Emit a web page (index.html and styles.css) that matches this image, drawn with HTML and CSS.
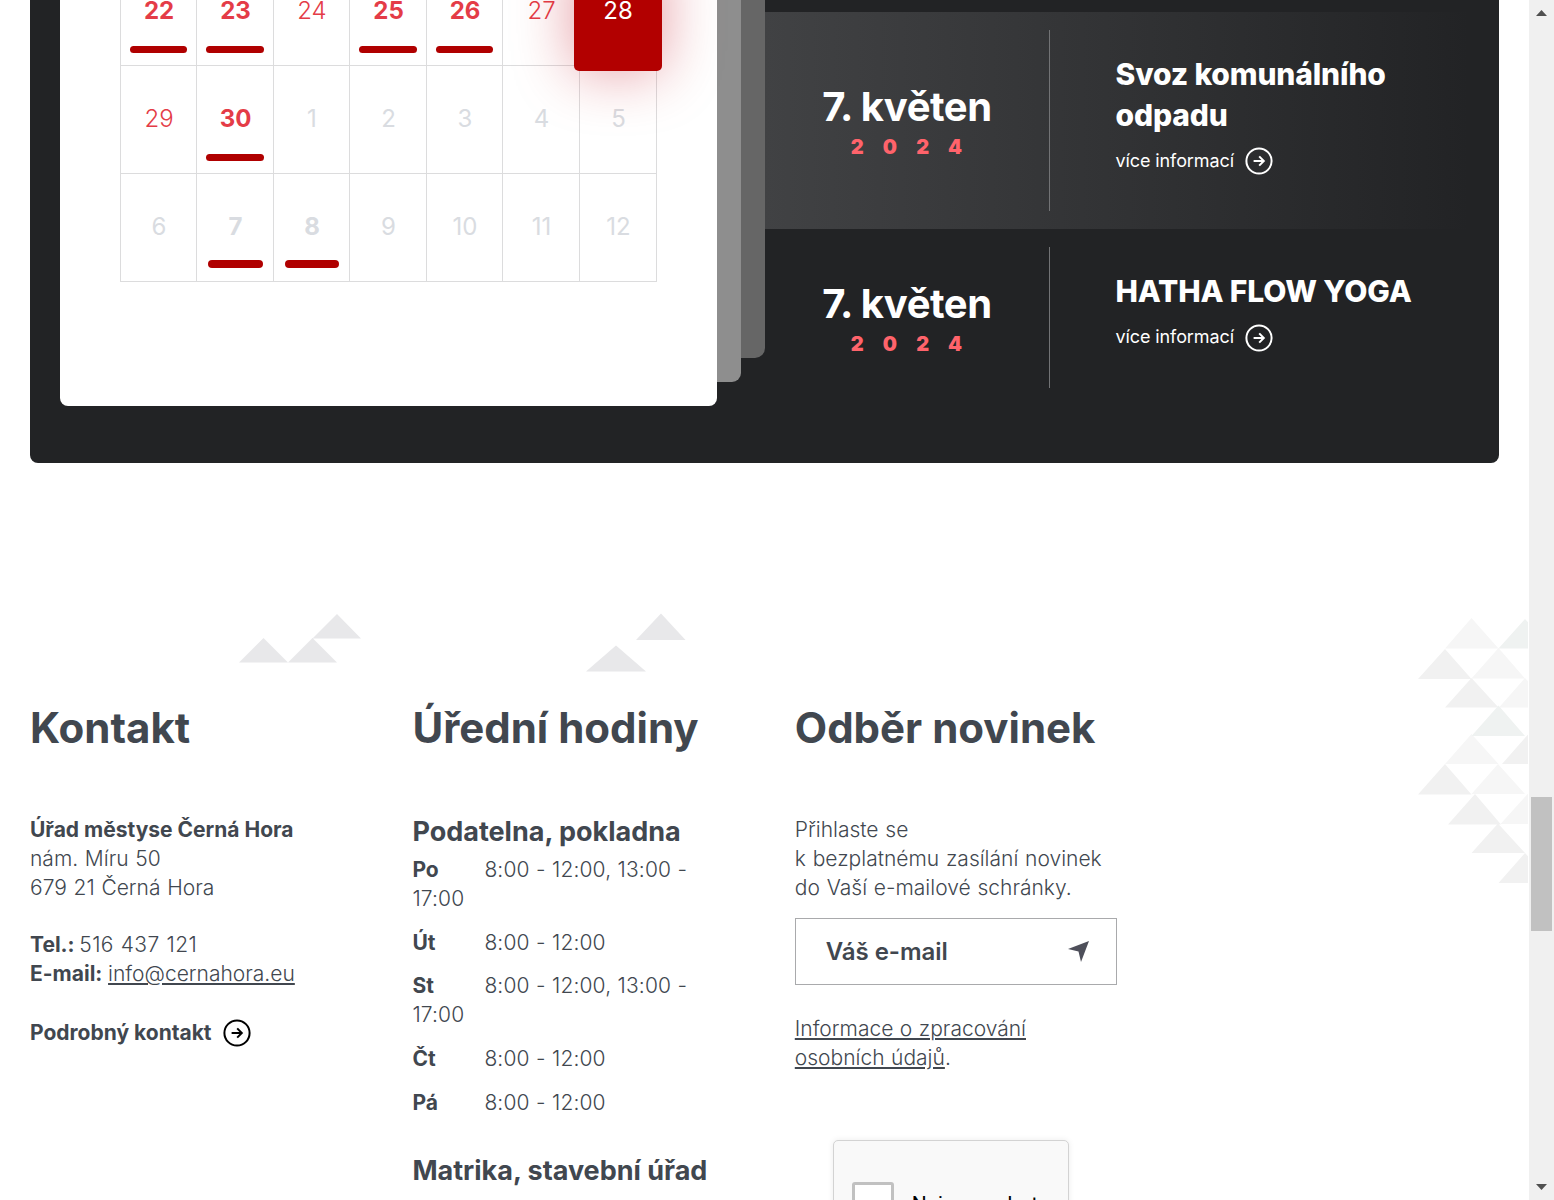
FILE: index.html
```html
<!DOCTYPE html>
<html lang="cs">
<head>
<meta charset="utf-8">
<title>Městys Černá Hora</title>
<link rel="stylesheet" href="styles.css">
</head>
<body>
<svg class="sprite" aria-hidden="true">
  <symbol id="arrow" viewBox="0 0 28 28">
    <circle cx="14" cy="14" r="12.6" fill="none" stroke="currentColor" stroke-width="2"/>
    <path d="M8.6 14H18.6M14.2 9.4L18.8 14L14.2 18.6" fill="none" stroke="currentColor" stroke-width="2"/>
  </symbol>
</svg>
<div class="page">
  <main class="content">
    <section class="agenda">
      <div class="stack">
        <div class="calendar">
          <div class="days">
            <span class="day busy">22</span><span class="day busy">23</span><span class="day">24</span><span class="day busy">25</span><span class="day busy">26</span><span class="day">27</span><span class="day today"><span class="today-box">28</span></span>
            <span class="day">29</span><span class="day busy">30</span><span class="day other">1</span><span class="day other">2</span><span class="day other">3</span><span class="day other">4</span><span class="day other">5</span>
            <span class="day other">6</span><span class="day other busy">7</span><span class="day other busy">8</span><span class="day other">9</span><span class="day other">10</span><span class="day other">11</span><span class="day other">12</span>
          </div>
        </div>
      </div>
      <div class="events">
        <article class="event shaded">
          <div class="date"><span class="date-day">7. květen</span><span class="date-year">2024</span></div>
          <div class="info"><h3 class="event-title">Svoz komunálního odpadu</h3><a class="more">více informací <svg class="arrow"><use href="#arrow"/></svg></a></div>
        </article>
        <article class="event">
          <div class="date"><span class="date-day">7. květen</span><span class="date-year">2024</span></div>
          <div class="info"><h3 class="event-title">HATHA FLOW YOGA</h3><a class="more">více informací <svg class="arrow"><use href="#arrow"/></svg></a></div>
        </article>
      </div>
    </section>
    <footer class="footer">
      <svg class="hills hills-left" viewBox="0 0 122 49"><path d="M0 48.5L24.500 24L49 48.500L73.500 24L98 48.500ZM73.500 24.500L98 0L122 24.500Z"/></svg>
      <svg class="hills hills-mid" viewBox="0 0 100 58"><path d="M0 57.500L30 31.500L60 57.500ZM50 26L75 -.500L99.500 26Z"/></svg>
      <svg class="pattern" viewBox="0 0 110 266">
        <g fill="#f6f6f6"><path d="M27 30.500L53.500 0L80.500 30.500ZM53.500 60.500L80.500 30L107 60.500ZM81 89.500L107 60L134 89.500ZM27 146L53.500 116L80.500 146ZM53.500 176L80 146L107 176ZM82.500 206L109.500 176L136 206Z"/></g>
        <g fill="#f1f1f1"><path d="M0 61L27 31L53.500 61ZM27 89.500L53.500 60L80.500 89.500ZM84 146L110.500 116L138 146ZM0 176.500L27 146L53.500 176.500ZM30 206.500L57 176L83 206.500ZM53.500 235L80 205.500L107 235ZM80.500 265L107 235L134 265Z"/></g>
        <g fill="#eff2f1"><path d="M80.500 30.500L107 1L134 30.500ZM53.500 118L80.500 87.500L107 118Z"/></g>
      </svg>
      <section class="column">
        <h2 class="heading">Kontakt</h2>
        <p class="address"><b>Úřad městyse Černá Hora</b><br>nám. Míru 50<br>679 21 Černá Hora</p>
        <p class="address"><b class="label">Tel.:</b> <span class="phone">516 437 121</span><br><b>E-mail:</b> <a class="link">info@cernahora.eu</a></p>
        <a class="detail">Podrobný kontakt <svg class="arrow dark"><use href="#arrow"/></svg></a>
      </section>
      <section class="column">
        <h2 class="heading">Úřední hodiny</h2>
        <h3 class="office">Podatelna, pokladna</h3>
        <p class="hours"><b class="weekday">Po</b>8:00 - 12:00, 13:00 - 17:00</p>
        <p class="hours"><b class="weekday">Út</b>8:00 - 12:00</p>
        <p class="hours"><b class="weekday">St</b>8:00 - 12:00, 13:00 - 17:00</p>
        <p class="hours"><b class="weekday">Čt</b>8:00 - 12:00</p>
        <p class="hours"><b class="weekday">Pá</b>8:00 - 12:00</p>
        <h3 class="office second">Matrika, stavební úřad</h3>
      </section>
      <section class="column">
        <h2 class="heading">Odběr novinek</h2>
        <p class="intro">Přihlaste se<br>k bezplatnému zasílání novinek do Vaší e-mailové schránky.</p>
        <div class="field"><span>Váš e-mail</span><svg class="send" viewBox="0 0 21 21"><path d="M0 8L21 0L13 21L10.500 10.500Z"/></svg></div>
        <p class="privacy"><a class="link">Informace o zpracování osobních údajů</a>.</p>
        <div class="captcha"><span class="checkbox"></span><span class="captcha-label">Nejsem robot</span></div>
      </section>
    </footer>
  </main>
  <div class="scrollbar">
    <svg class="tick" viewBox="0 0 11 6"><path d="M0 6L5.500 0L11 6Z"/></svg>
    <div class="thumb"></div>
    <svg class="tick" viewBox="0 0 11 6"><path d="M0 0L5.500 6L11 0Z"/></svg>
  </div>
</div>
</body>
</html>
```

FILE: styles.css
```css
* { box-sizing: border-box; }
body { margin: 0; overflow: hidden; background: #fff; color: #41474f; font: 300 21px/28.9px Inter, sans-serif; }
h2, h3, p { margin: 0; }
b { font-weight: 700; word-spacing: 0; letter-spacing: 0; }
.sprite { display: none; }
.page { display: flex; height: 1200px; overflow: hidden; }
.content { width: 1529px; height: 1200px; overflow: hidden; padding: 0 30px; }

.agenda { display: flex; height: 463px; background: #222325; border-radius: 0 0 8px 8px; }
.stack { width: 735px; padding-left: 30px; position: relative; }
.stack::before, .stack::after { content: ""; position: absolute; top: 0; left: 60px; }
.stack::before { width: 675px; height: 358px; background: #666; border-radius: 0 0 10px 0; }
.stack::after { width: 651px; height: 382px; background: #8e8e8e; border-radius: 0 0 9px 0; }
.calendar { position: relative; z-index: 1; width: 657px; height: 406px; padding: 0 60px; background: #fff; border-radius: 0 0 8px 8px; }
.days { display: grid; grid-template-columns: 76px 77px 76px 77px 76px 77px 77px; grid-auto-rows: 108px; width: 537px; margin-top: -42px; border-left: 1px solid #dcdcdd; }
.calendar::before { content: ""; display: table; }
.day { position: relative; display: flex; align-items: center; justify-content: center; padding-left: 1px; border-right: 1px solid #dcdcdd; border-bottom: 1px solid #dcdcdd; color: #e43c47; font-size: 24px; }
.day.busy { font-weight: 700; }
.day.busy::after { content: ""; position: absolute; left: 9px; right: 9px; bottom: 12px; height: 7px; border-radius: 4px; background: #b00000; }
.day.other { color: #d9dce1; font-weight: 400; }
.day.other.busy { font-weight: 700; }
.day.other.busy::after { left: 10.500px; right: 10.500px; bottom: 13px; height: 8px; }
.day.today { z-index: 1; }
.today-box { position: absolute; inset: -5px -6px -6px -6px; display: flex; align-items: center; justify-content: center; padding-bottom: 1px; border-radius: 5px; background: #b20000; color: #fff; font-weight: 400; box-shadow: 0 0 60px rgba(190, 0, 20, .4); }

.events { flex: 1; padding: 12px 30px 0 0; }
.event { display: flex; padding: 18px 0; }
.event.shaded { background: linear-gradient(90deg, #414244, #222325); }
.date { display: flex; flex-direction: column; align-items: center; justify-content: center; width: 285px; padding-top: 7px; border-right: 1px solid #727375; color: #fff; }
.date-day { font-size: 40px; font-weight: 700; line-height: 46px; letter-spacing: -.45px; }
.date-year { padding-left: 18px; font-size: 20px; font-weight: 900; line-height: 34px; letter-spacing: 19.200px; color: #ff636b; }
.info { flex: 1; padding: 24px 0 35px 65.500px; color: #fff; }
.event-title { font-size: 30px; font-weight: 800; line-height: 40.500px; letter-spacing: -.15px; }
.more { display: flex; align-items: center; gap: 11.500px; height: 41px; padding-top: 11px; font-size: 18px; font-weight: 400; letter-spacing: -.1px; }
.arrow { width: 28px; height: 28px; color: #fff; }
.arrow.dark { color: #000; margin-top: -1px; }

.footer { position: relative; display: grid; grid-template-columns: repeat(3, 322px); column-gap: 60.400px; padding-top: 236px; }
.hills { position: absolute; fill: #e8e8ea; }
.hills-left { left: 209px; top: 151px; width: 122px; height: 49px; }
.hills-mid { left: 556px; top: 151px; width: 100px; height: 58px; overflow: visible; }
.pattern { position: absolute; left: 1388px; top: 155px; width: 110px; height: 266px; }
.heading { height: 117px; font-size: 42px; font-weight: 700; line-height: 58px; }
.address { margin-bottom: 28.500px; word-spacing: .8px; }
.label { margin-right: -2px; }
.phone { letter-spacing: .35px; }
.link { text-decoration: underline; text-decoration-thickness: 2px; text-underline-offset: 2px; }
.address .link { margin-left: -1px; }
.detail { display: flex; align-items: center; gap: 11.500px; height: 32px; font-weight: 700; }
.office { height: 40px; margin-top: -1px; font-size: 27px; font-weight: 700; line-height: 34px; }
.hours { position: relative; top: 1px; margin-bottom: 14.800px; word-spacing: .3px; letter-spacing: .14px; }
.weekday { display: inline-block; width: 72px; }
.office.second { margin-top: 37px; }
.intro { word-spacing: .9px; }
.field { display: flex; align-items: center; justify-content: space-between; height: 67px; margin: 15px 0 30px; padding: 0 27px 0 30px; border: 1px solid #a9aaac; font-size: 24px; font-weight: 600; letter-spacing: -.05px; }
.field span { padding-top: 2px; }
.send { width: 21px; height: 21px; fill: #4e4f5a; }
.privacy { word-spacing: .6px; }
.captcha { display: flex; width: 236px; height: 117px; margin: 67px 0 0 38px; padding: 41px 0 0 18px; gap: 18px; background: #f9f9f9; border: 1px solid #d3d3d3; border-radius: 5px; box-shadow: 0 0 6px rgba(0, 0, 0, .08); }
.checkbox { width: 42px; height: 42px; border: 3px solid #c1c1c1; border-radius: 3px; background: #fff; }
.captcha-label { padding-top: 10px; color: #000; font: 400 21px/25px Roboto, sans-serif; }

.scrollbar { display: flex; flex-direction: column; align-items: center; width: 25px; height: 1200px; padding: 10px 0; background: #f0f0f0; }
.tick { width: 11px; height: 6px; fill: #505050; }
.thumb { width: 21px; height: 134px; margin: 781px 0 253px; background: #c1c1c1; }
```
